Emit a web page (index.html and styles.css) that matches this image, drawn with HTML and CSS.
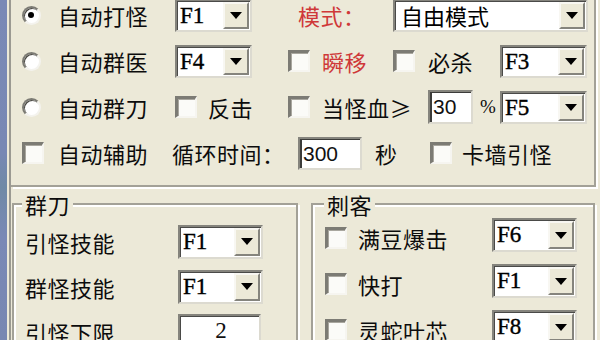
FILE: index.html
```html
<!DOCTYPE html>
<html lang="zh-CN">
<head>
<meta charset="utf-8">
<title>挂机设置</title>
<link rel="stylesheet" href="styles.css">
</head>
<body>
<div class="window">
  <div class="strip"></div>
  <div class="main">
    <div class="top">
      <div class="row r1">
        <span class="radio checked"></span>
        <span class="lbl">自动打怪</span>
        <div class="combo w77"><span class="val">F1</span><span class="btn"></span></div>
        <span class="lbl red">模式：</span>
        <div class="combo w195"><span class="val cjk">自由模式</span><span class="btn"></span></div>
      </div>
      <div class="row r2">
        <span class="radio"></span>
        <span class="lbl">自动群医</span>
        <div class="combo w77"><span class="val">F4</span><span class="btn"></span></div>
        <span class="check"></span>
        <span class="lbl red">瞬移</span>
        <span class="check"></span>
        <span class="lbl">必杀</span>
        <div class="combo w87"><span class="val">F3</span><span class="btn"></span></div>
      </div>
      <div class="row r3">
        <span class="radio"></span>
        <span class="lbl">自动群刀</span>
        <span class="check"></span>
        <span class="lbl">反击</span>
        <span class="check"></span>
        <span class="lbl">当怪血≥</span>
        <span class="tbox w45">30</span>
        <span class="pct">%</span>
        <div class="combo w87"><span class="val">F5</span><span class="btn"></span></div>
      </div>
      <div class="row r4">
        <span class="check"></span>
        <span class="lbl">自动辅助</span>
        <span class="lbl">循环时间：</span>
        <span class="tbox w64">300</span>
        <span class="lbl">秒</span>
        <span class="check"></span>
        <span class="lbl">卡墙引怪</span>
      </div>
    </div>
    <div class="bottom">
      <fieldset class="grp grp-left">
        <legend>群刀</legend>
        <div class="grp-rows left-rows">
          <span class="lbl">引怪技能</span>
          <div class="combo w85"><span class="val">F1</span><span class="btn"></span></div>
          <span class="lbl">群怪技能</span>
          <div class="combo w85"><span class="val">F1</span><span class="btn"></span></div>
          <span class="lbl">引怪下限</span>
          <span class="tbox w83 center">2</span>
        </div>
      </fieldset>
      <fieldset class="grp grp-right">
        <legend>刺客</legend>
        <div class="grp-rows right-rows">
          <span class="check"></span>
          <span class="lbl">满豆爆击</span>
          <div class="combo w85"><span class="val">F6</span><span class="btn"></span></div>
          <span class="check"></span>
          <span class="lbl">快打</span>
          <div class="combo w85"><span class="val">F1</span><span class="btn"></span></div>
          <span class="check"></span>
          <span class="lbl">灵蛇叶芯</span>
          <div class="combo w85"><span class="val">F8</span><span class="btn"></span></div>
        </div>
      </fieldset>
    </div>
  </div>
</div>
</body>
</html>
```
FILE: styles.css
```css
* { box-sizing: border-box; }
html, body { margin: 0; padding: 0; }
body {
  width: 600px;
  height: 340px;
  overflow: hidden;
  background: #ece9d8;
  font-family: "Noto Sans CJK SC", "Noto Sans", sans-serif;
  font-size: 22px;
  color: #0c0c0c;
}
.window { display: flex; height: 340px; }
.strip {
  width: 7px;
  flex: none;
  margin-right: 2px;
  background: linear-gradient(#7a89b6 0%, #7888b4 45%, #6f8aa6 55%, #7a89b6 70%, #7887b2 100%);
}
.main {
  flex: 1;
  display: flex;
  flex-direction: column;
  border-left: 2px solid #9b9a92;
}
.top {
  margin-top: -8px;
  margin-right: 4px;
  padding: 0 0 9px 11px;
  border-right: 2px solid #a3a197;
  border-bottom: 2px solid #a3a197;
  box-shadow: 2px 2px 0 #fff;
}
.row {
  display: grid;
  height: 46px;
  align-items: center;
  justify-items: start;
}
.r1 { grid-template-columns: 36px 117px 123px 95px 195px; }
.r2 { grid-template-columns: 36px 117px 113px 34px 71px 35px 72px 87px; }
.r3 { grid-template-columns: 36px 117px 33px 80px 34px 106px 52px 20px 87px; }
.r4 { grid-template-columns: 36px 114px 126px 77px 55px 32px auto; }

.lbl { line-height: 28px; white-space: nowrap; letter-spacing: 0.5px; }
.red { color: #cf3838; }
.pct { font-family: "Liberation Serif", serif; font-size: 19px; }

.radio {
  position: relative;
  width: 19px;
  height: 19px;
  border-radius: 50%;
  background: #fff;
  border: 2px solid;
  border-color: #7c7b74 #f4f3ee #f4f3ee #7c7b74;
  box-shadow: inset 1px 1px 0 #4a4944;
}
.radio.checked::after {
  content: "";
  position: absolute;
  left: 4px;
  top: 4px;
  width: 6px;
  height: 6px;
  border-radius: 50%;
  background: #000;
}
.check {
  width: 22px;
  height: 22px;
  background: #fbfbf8;
  border-style: solid;
  border-width: 3px 2px 2px 3px;
  border-color: #7c7b74 #f6f5f0 #f6f5f0 #7c7b74;
  box-shadow: inset 1px 1px 0 #a9a79f;
}

.combo {
  display: flex;
  align-items: stretch;
  height: 33px;
  padding: 1px 1px 1px 3px;
  background: #fff;
  border: 2px solid;
  border-color: #85847d #dcdad0 #dcdad0 #85847d;
  box-shadow: inset 1px 1px 0 #4a4a48;
}
.w77 { width: 77px; }
.w85 { width: 85px; height: 34px; }
.w87 { width: 87px; }
.w195 { width: 195px; }
.val {
  flex: 1;
  font-family: "Liberation Serif", serif;
  font-size: 23px;
  line-height: 27px;
  color: #000;
  -webkit-text-stroke: 0.4px #000;
}
.val.cjk {
  font-family: "Noto Sans CJK SC", sans-serif;
  font-size: 22px;
  padding-left: 3px;
  line-height: 26px;
  -webkit-text-stroke: 0;
}
.btn {
  flex: none;
  width: 26px;
  display: flex;
  align-items: center;
  justify-content: center;
  background: #ece9d8;
  border: 2px solid;
  border-color: #f8f7f2 #85847d #85847d #f8f7f2;
}
.btn::after {
  content: "";
  border-left: 6px solid transparent;
  border-right: 6px solid transparent;
  border-top: 7px solid #000;
}

.tbox {
  height: 34px;
  padding-left: 3px;
  background: #fff;
  border: 2px solid;
  border-color: #85847d #dcdad0 #dcdad0 #85847d;
  box-shadow: inset 2px 1px 0 #3c3c3a;
  font-family: "Liberation Sans", sans-serif;
  font-size: 21px;
  line-height: 30px;
  color: #111;
}
.w45 { width: 45px; }
.w64 { width: 64px; height: 33px; }
.w83 { width: 83px; height: 36px; }
.tbox.center {
  text-align: center;
  font-family: "Liberation Serif", serif;
  font-size: 23px;
  box-shadow: inset 1px 1px 0 #4a4a48;
}

.bottom {
  display: flex;
  align-items: flex-start;
}
.grp {
  margin: 0;
  padding: 0;
  min-width: 0;
  height: 190px;
  border: 2px solid #a3a197;
  box-shadow: inset 2px 2px 0 #fff, 2px 2px 0 #fff;
}
.grp legend {
  padding: 0 3px;
  background: #ece9d8;
  letter-spacing: 0.5px;
}
.grp-left {
  width: 286px;
  margin: 4px 0 0 1px;
}
.grp-left legend { margin-left: 8px; line-height: 26px; }
.grp-right {
  width: 284px;
  margin: 6px 0 0 13px;
}
.grp-right legend { margin-left: 11px; line-height: 22px; }
.grp-rows {
  display: grid;
  align-items: center;
  justify-items: start;
}
.left-rows {
  padding: 2px 0 0 11px;
  grid-template-columns: 153px 85px;
  grid-auto-rows: 45px;
}
.right-rows {
  padding: 0 0 0 12px;
  grid-template-columns: 33px 134px 85px;
  grid-auto-rows: 46px;
}
.right-rows .combo { margin-top: -6px; }
```
